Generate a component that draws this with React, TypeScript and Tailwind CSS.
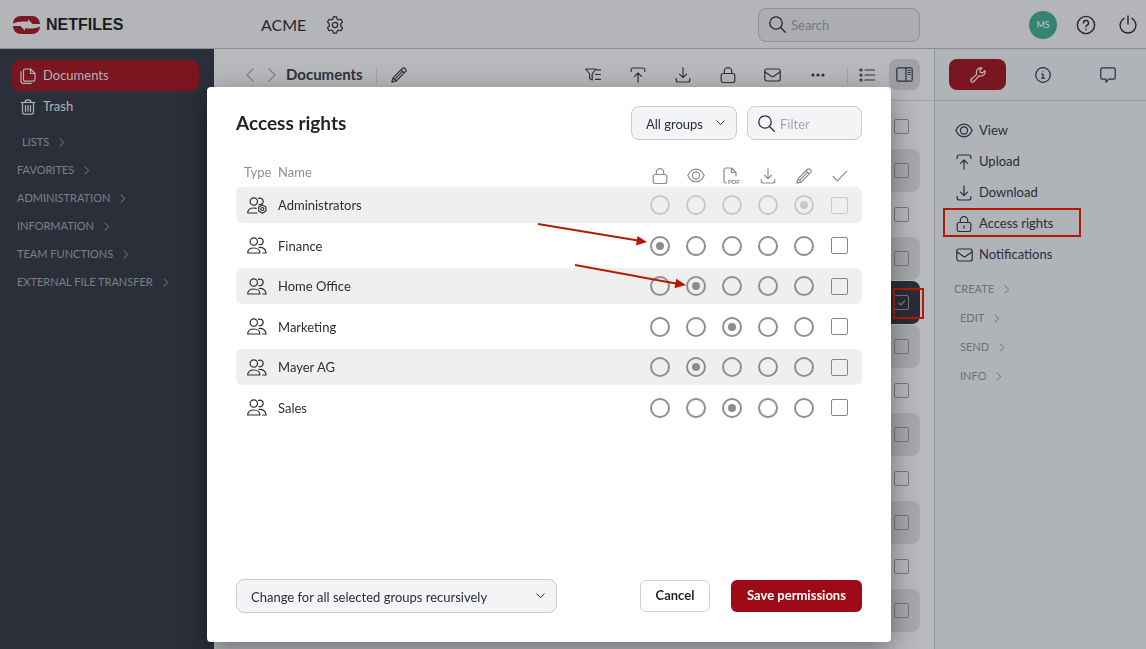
import { useState } from "react";
import type { ReactNode } from "react";

const MENU_SECTIONS = [
  { label: "LISTS", indent: true },
  { label: "FAVORITES" },
  { label: "ADMINISTRATION" },
  { label: "INFORMATION" },
  { label: "TEAM FUNCTIONS" },
  { label: "EXTERNAL FILE TRANSFER" },
];

const RIGHTS = ["none", "view", "pdf", "download", "edit"];

const GROUPS = [
  { name: "Administrators", right: "edit", locked: true },
  { name: "Finance", right: "none" },
  { name: "Home Office", right: "view" },
  { name: "Marketing", right: "pdf" },
  { name: "Mayer AG", right: "view" },
  { name: "Sales", right: "pdf" },
];

const FILE_ROWS = Array.from({ length: 12 }, (_, i) => i);
const SELECTED_ROW = 4;

type IconProps = { w?: number; h?: number; sw?: number; className?: string; children?: ReactNode };

function Icon({ w = 16, h = 16, sw = 1.2, className, children }: IconProps) {
  return (
    <svg
      width={w}
      height={h}
      viewBox={`0 0 ${w} ${h}`}
      fill="none"
      stroke="currentColor"
      strokeWidth={sw}
      strokeLinecap="round"
      strokeLinejoin="round"
      className={className ? `shrink-0 ${className}` : "shrink-0"}
      aria-hidden="true"
    >
      {children}
    </svg>
  );
}

const UploadIcon = () => (
  <Icon>
    <path d="M1.2 4.5V3c0-1.2.8-2 2-2h9.6c1.2 0 2 .8 2 2v1.5M8 15.200V6M4.5 9.300 8 5.800l3.5 3.500" />
  </Icon>
);

const DownloadIcon = () => (
  <Icon>
    <path d="M1.2 11.5V13c0 1.200.8 2 2 2h9.6c1.200 0 2-.8 2-2v-1.500M8 .8V10.500M4.500 7.200 8 10.700l3.500-3.500" />
  </Icon>
);

const LockIcon = ({ keyhole = false }: { keyhole?: boolean }) => (
  <Icon>
    <rect x="1.2" y="6.5" width="13.6" height="9" rx="2" />
    <path d="M4.300 6.500V4.300a3.700 3.700 0 0 1 7.400 0v2.200" />
    {keyhole && <path d="M8 9.800v2.400" />}
  </Icon>
);

const MailIcon = () => (
  <Icon w={17} h={14}>
    <rect x=".8" y="1" width="15.4" height="12" rx="2" />
    <path d="m1.200 4 6 4.200c.8.5 1.800.5 2.600 0l6-4.200" />
  </Icon>
);

const EyeIcon = () => (
  <Icon w={18} h={15}>
    <path d="M.8 7.500C2.600 3.800 5.600 1.200 9 1.200s6.400 2.600 8.200 6.300c-1.800 3.700-4.800 6.300-8.200 6.300S2.600 11.200.8 7.500Z" />
    <circle cx="9" cy="7.5" r="3.6" />
  </Icon>
);

const PencilIcon = () => (
  <Icon>
    <path d="M.8 15.200 2 10.800 11.300 1.500c.8-.8 1.900-.8 2.600 0l.6.6c.8.8.8 1.900 0 2.600L5.200 14l-4.400 1.200ZM10 2.800 13.200 6M2 10.800 5.200 14M3.800 12.200l8-8" />
  </Icon>
);

const SearchIcon = () => (
  <Icon w={17} h={17} sw={1.3}>
    <circle cx="7" cy="7" r="6.2" />
    <path d="m11.500 11.500 4.800 4.800" />
  </Icon>
);

const PdfIcon = () => (
  <Icon w={18} h={17}>
    <path d="M3.500 16H3c-1.200 0-2-.8-2-2V3c0-1.200.8-2 2-2h5.500L13 5.500V9M8.500 1v4.500H13" />
    <text x="5" y="16.500" fontSize="6" fontWeight="700" fill="currentColor" stroke="none" fontFamily="Liberation Sans, sans-serif">
      PDF
    </text>
  </Icon>
);

const CheckIcon = () => (
  <Icon>
    <path d="m1.200 8.500 4.200 4.300 9.400-9.600" />
  </Icon>
);

const ChevronIcon = () => (
  <Icon w={6} h={9} sw={1}>
    <path d="m1 .8 3.800 3.700L1 8.200" />
  </Icon>
);

function GroupIcon({ admin = false }: { admin?: boolean }) {
  return (
    <Icon w={20} h={17}>
      <circle cx="6.8" cy="4.5" r="3.7" />
      <path d="M11.600 1.400a3.300 3.300 0 1 1 .4 6.200" />
      {admin ? (
        <>
          <path d="M10 16H.7c0-3 2.400-5 6.100-5 .9 0 1.700.1 2.400.3" />
          <path d="m15.300 7.900 3.600 2.100v4.100l-3.600 2.100-3.600-2.100V10Z" />
          <circle cx="15.3" cy="12" r="1.5" />
        </>
      ) : (
        <>
          <path d="M.7 16c0-3 2.400-5 6.100-5s6.100 2 6.100 5Z" />
          <path d="M12 10.500c4-.4 7 1.900 7.200 5.500h-3.500" />
        </>
      )}
    </Icon>
  );
}

function Logo() {
  return (
    <a href="#" className="flex w-[236px] items-center gap-[6px] pl-[13px]">
      <svg width="27" height="18" viewBox="0 0 27 18" aria-hidden="true">
        <path
          fill="#7d1822"
          d="M0 7.500C.4 2.800 3.300 0 8 0h11c4.700 0 7.700 3 8 8H19.500L15 3.200v2.600C9 5 4 5.500 0 7.500ZM27 10.500c-.4 4.700-3.300 7.500-8 7.500H8c-4.700 0-7.700-3-8-8h7.500l4.500 4.800v-2.600c6 .8 11 .3 15-1.700Z"
        />
      </svg>
      <span className="font-['Liberation_Sans',sans-serif] text-[16px] font-bold text-[#191b20]">NETFILES</span>
    </a>
  );
}

function Header() {
  return (
    <header className="flex h-[49px] items-center border-b border-[#8c8d92] bg-[#b4b5b9] pt-px text-[#23262f] shadow-[0_1px_3px_rgba(0,0,0,0.2)]">
      <Logo />
      <div className="flex flex-1 items-center gap-5 pl-[25px]">
        <span className="text-[16px]">ACME</span>
        <button type="button" aria-label="Settings">
          <Icon w={18} h={18}>
            <path d="M7.400.8h3.200l.5 2.300 1.500.9 2.300-.8 1.600 2.800-1.700 1.700v2.600l1.700 1.700-1.600 2.800-2.300-.8-1.500.9-.5 2.300H7.400l-.5-2.300-1.500-.9-2.300.8L1.500 12l1.700-1.700V7.700L1.500 6l1.600-2.800 2.300.8 1.500-.9Z" />
            <circle cx="9" cy="9" r="2.700" />
          </Icon>
        </button>
      </div>
      <label className="flex h-[34px] w-[162px] items-center gap-[5px] rounded-lg border border-[#919297] bg-[#acadb1] px-[10px]">
        <SearchIcon />
        <input
          type="search"
          aria-label="Search"
          placeholder="Search"
          className="w-full min-w-0 bg-transparent pt-[3px] text-[13px] outline-none placeholder:text-[#77787d]"
        />
      </label>
      <div className="flex w-[226px] items-center justify-end gap-[19px] pr-[9px]">
        <span className="flex size-7 items-center justify-center rounded-full bg-[#358372] text-[9px] text-[#b9cfca]">MS</span>
        <button type="button" aria-label="Help">
          <Icon w={20} h={20} sw={1.4}>
            <circle cx="10" cy="10" r="8.600" />
            <path d="M7.500 8a2.500 2.500 0 1 1 3.600 2.200c-.8.4-1.100.8-1.100 1.600M10 14.300v.1" />
          </Icon>
        </button>
        <button type="button" aria-label="Log out" className="ml-1">
          <Icon w={18} h={19} sw={1.4}>
            <path d="M9 1v8M5 3.300a7.900 7.900 0 1 0 8 0" />
          </Icon>
        </button>
      </div>
    </header>
  );
}

function Sidebar() {
  return (
    <aside className="w-[214px] bg-[#2b2f3a] pt-[11px] pr-[15px] pl-3 text-[13px] text-[#b1b3b8]">
      <a href="#" className="flex h-[31px] items-center gap-[7px] rounded-lg bg-[#7a1620] px-2">
        <Icon>
          <path d="M5.200 1h5.300L15 5.500v6c0 1-.7 1.700-1.700 1.700H5.200c-1 0-1.700-.7-1.700-1.700V2.700C3.500 1.700 4.200 1 5.200 1ZM10.500 1v4.500H15M1 3.500v9.300c0 1.600 1 2.600 2.600 2.600h7.700" />
        </Icon>
        Documents
      </a>
      <a href="#" className="flex h-[31px] items-center gap-[7px] px-2">
        <Icon>
          <path d="M1 3.500h14M2.500 3.500V13c0 1.400.8 2.200 2.200 2.200h6.600c1.400 0 2.200-.8 2.200-2.200V3.500M5 3.500C5 1.800 6 .8 8 .8s3 1 3 2.700M5.500 6.500v5.800M8 6.500v5.800M10.500 6.500v5.800" />
        </Icon>
        Trash
      </a>
      <nav className="mt-[6px] pl-[5px] text-[11px] text-[#7c7f87]">
        {MENU_SECTIONS.map((s) => (
          <button
            key={s.label}
            type="button"
            className={`flex h-7 items-center gap-[10px] whitespace-nowrap ${s.indent ? "pl-[5px]" : ""}`}
          >
            {s.label}
            <ChevronIcon />
          </button>
        ))}
      </nav>
    </aside>
  );
}

function ToolButton({ label, children }: { label: string; children: ReactNode }) {
  return (
    <button type="button" aria-label={label} className="flex w-[45px] justify-center">
      {children}
    </button>
  );
}

function Toolbar() {
  return (
    <div className="flex h-[52px] items-center border-b border-[#a2a3a7] pl-8 text-[#30333d]">
      <button type="button" aria-label="Back" className="text-[#808186]">
        <Icon w={8} h={14}>
          <path d="M7 1 1 7l6 6" />
        </Icon>
      </button>
      <button type="button" aria-label="Forward" className="ml-[14px] text-[#808186]">
        <Icon w={8} h={14}>
          <path d="m1 1 6 6-6 6" />
        </Icon>
      </button>
      <h1 className="ml-[10px] text-[15px] font-bold">Documents</h1>
      <span className="ml-[13px] h-4 w-px bg-[#a2a3a7]" />
      <button type="button" aria-label="Rename" className="ml-[14px]">
        <PencilIcon />
      </button>
      <div className="ml-auto flex items-center">
        <ToolButton label="Filter list">
          <Icon>
            <path d="M.8 2h10L7.200 7v6l-2.600-1.500V7ZM11.500 2.800h4M10.500 7.500h5M10.500 12.300h5" />
          </Icon>
        </ToolButton>
        <ToolButton label="Upload"><UploadIcon /></ToolButton>
        <ToolButton label="Download"><DownloadIcon /></ToolButton>
        <ToolButton label="Access rights"><LockIcon /></ToolButton>
        <ToolButton label="Notifications"><MailIcon /></ToolButton>
        <ToolButton label="More">
          <Icon w={14} h={4}>
            <g fill="currentColor" stroke="none">
              <circle cx="2" cy="2" r="1.600" />
              <circle cx="7" cy="2" r="1.600" />
              <circle cx="12" cy="2" r="1.600" />
            </g>
          </Icon>
        </ToolButton>
        <span className="ml-[7px] h-4 w-px bg-[#a2a3a7]" />
        <button type="button" aria-label="List view" className="ml-[11px]">
          <Icon h={14}>
            <path d="M6 2h9.500M6 7h9.500M6 12h9.500" />
            <circle cx="2" cy="2" r="1" />
            <circle cx="2" cy="7" r="1" />
            <circle cx="2" cy="12" r="1" />
          </Icon>
        </button>
        <button type="button" aria-label="Details" className="mx-[14px] flex size-[31px] items-center justify-center rounded-lg bg-[#a0a1a6]">
          <Icon w={17} h={15}>
            <rect x=".8" y=".8" width="15.400" height="13.400" rx="1.500" />
            <path d="M10 1v13M12.200 3.500h2M12.200 5.500h2M12.200 7.500h2" />
          </Icon>
        </button>
      </div>
    </div>
  );
}

function FileList() {
  return (
    <ul className="flex flex-col gap-px px-[14px] pt-1">
      {FILE_ROWS.map((i) => (
        <li
          key={i}
          className={`flex h-[43px] shrink-0 items-center justify-end rounded-lg pr-[11px] ${
            i === SELECTED_ROW ? "bg-[#2a2d38]" : i % 2 ? "bg-[#a7a8ab]" : ""
          }`}
        >
          <span className="relative flex">
            <input
              type="checkbox"
              defaultChecked={i === SELECTED_ROW}
              aria-label={`Select entry ${i + 1}`}
              className="peer size-[15px] appearance-none rounded-[2px] border border-[#77787e]"
            />
            <Icon w={15} h={15} className="pointer-events-none absolute inset-0 hidden text-[#85878e] peer-checked:block">
              <path d="m4.500 7.600 2.200 2.200 4-4.200" />
            </Icon>
            {i === SELECTED_ROW && <span className="absolute -top-[7px] -left-px size-[31px] border-2 border-[#b41a00]" />}
          </span>
        </li>
      ))}
    </ul>
  );
}

function DetailsPanel() {
  const actions = [
    { label: "View", icon: <EyeIcon /> },
    { label: "Upload", icon: <UploadIcon /> },
    { label: "Download", icon: <DownloadIcon /> },
    { label: "Access rights", icon: <LockIcon keyhole />, marked: true },
    { label: "Notifications", icon: <MailIcon /> },
  ];
  return (
    <aside className="w-[212px] border-l border-[#939499] bg-[#b0b3b7] text-[13px] text-[#2b2e38]">
      <div className="flex h-[52px] items-center gap-2 border-b border-[#9b9da1] pl-[14px]">
        <button type="button" aria-label="Tools" className="flex h-[31px] w-[57px] items-center justify-center rounded-lg bg-[#7a1620] text-[#c6b5b9]">
          <Icon>
            <path d="M1.300 14.700c-.8-.8-.7-2 0-2.700l5.400-4.600C6 4.700 6.500 3 7.800 1.900 9 .9 10.600.6 12 1L9.800 3.200l.4 2.200 2.400.4L14.900 3.600c.5 1.500.1 3.200-1 4.300-1.200 1.200-2.900 1.600-5.100 1L4 14.700c-.7.8-1.900.8-2.700 0ZM3 13v.1" />
          </Icon>
        </button>
        <button type="button" aria-label="Info" className="flex w-[57px] justify-center">
          <Icon>
            <circle cx="8" cy="8" r="7.300" />
            <path d="M6.700 7H8v4M6.500 11.200h3M8 4.500v.2" />
          </Icon>
        </button>
        <button type="button" aria-label="Comments" className="flex w-[57px] justify-center">
          <Icon>
            <path d="M2.200.8h11.600c1 0 1.400.6 1.400 1.400v8.600c0 .9-.5 1.400-1.400 1.400H9l-3 3v-3H2.200c-.9 0-1.400-.5-1.400-1.400V2.200c0-.9.5-1.400 1.400-1.400Z" />
          </Icon>
        </button>
      </div>
      <ul className="pt-[14px]">
        {actions.map((a) => (
          <li key={a.label} className="relative">
            <a href="#" className="flex h-[31px] items-center gap-[6px] pl-5">
              <span className="flex w-[18px] justify-center">{a.icon}</span>
              {a.label}
            </a>
            {a.marked && <span className="pointer-events-none absolute top-0 left-2 h-[29px] w-[138px] border-2 border-[#b41a00]" />}
          </li>
        ))}
      </ul>
      <nav className="mt-[5px] pl-[19px] text-[11px] text-[#6d7077]">
        {["CREATE", "EDIT", "SEND", "INFO"].map((label) => (
          <button
            key={label}
            type="button"
            className={`flex h-[29px] items-center gap-[10px] ${label === "CREATE" ? "" : "pl-[6px]"}`}
          >
            {label}
            <ChevronIcon />
          </button>
        ))}
      </nav>
    </aside>
  );
}

function Select({ label, option, className }: { label: string; option: string; className: string }) {
  return (
    <div className={`relative ${className}`}>
      <select
        aria-label={label}
        className="h-[34px] w-full appearance-none rounded-lg border border-[#c9ccd0] bg-[#f3f4f6] px-[14px] pt-[3px] text-[13px] text-[#2b2e38]"
      >
        <option>{option}</option>
      </select>
      <Icon w={9} h={6} sw={1} className="pointer-events-none absolute top-[14px] right-3">
        <path d="m.8.8 3.700 3.900L8.200.8" />
      </Icon>
    </div>
  );
}

function AccessDialog() {
  const [rights, setRights] = useState<Record<string, string>>(
    Object.fromEntries(GROUPS.map((g) => [g.name, g.right])),
  );

  const columns = [
    { label: "No access", icon: <LockIcon /> },
    { label: "View", icon: <EyeIcon /> },
    { label: "PDF", icon: <PdfIcon /> },
    { label: "Download", icon: <DownloadIcon /> },
    { label: "Edit", icon: <PencilIcon /> },
  ];

  return (
    <div className="fixed inset-0 flex justify-center pt-[87px] pr-12 pb-[7px]">
      <div
        role="dialog"
        aria-label="Access rights"
        className="relative flex w-full max-w-[684px] flex-col rounded-[4px] bg-white px-[29px] pt-[19px] pb-[29px] text-[#2b2e38] shadow-[0_8px_28px_rgba(0,0,0,0.4)]"
      >
        <div className="flex items-center gap-[10px]">
          <h2 className="mr-auto text-[19px] font-bold text-[#1f2229]">Access rights</h2>
          <Select label="Groups" option="All groups" className="w-[106px]" />
          <label className="flex h-[34px] w-[115px] items-center gap-[5px] rounded-lg border border-[#c9ccd0] bg-[#f3f4f6] px-[10px]">
            <SearchIcon />
            <input
              type="text"
              aria-label="Filter"
              placeholder="Filter"
              className="w-full min-w-0 bg-transparent pt-[3px] text-[13px] outline-none placeholder:text-[#a4a6ab]"
            />
          </label>
        </div>

        <table className="mt-5 w-full table-fixed text-left text-[13px]">
          <thead className="text-[#8b8d93]">
            <tr className="h-[27px]">
              <th className="w-[42px] pt-[3px] pl-2 align-top font-normal">Type</th>
              <th className="pt-[3px] align-top font-normal">Name</th>
              {columns.map((c) => (
                <th key={c.label} aria-label={c.label} className="w-9 pt-1">
                  <span className="flex justify-center">{c.icon}</span>
                </th>
              ))}
              <th aria-label="Apply" className="w-10 pt-1 pr-[5px]">
                <span className="flex justify-center"><CheckIcon /></span>
              </th>
            </tr>
          </thead>
          <tbody>
            {GROUPS.map((g, i) => (
              <tr key={g.name} className={i % 2 ? "h-[45px]" : "h-9 bg-[#efefef]"}>
                <td className="rounded-l-md pl-[11px]">
                  <GroupIcon admin={g.locked} />
                </td>
                <td className="pt-[2px]">{g.name}</td>
                {RIGHTS.map((r) => (
                  <td key={r}>
                    <input
                      type="radio"
                      name={g.name}
                      aria-label={`${g.name}: ${r}`}
                      checked={rights[g.name] === r}
                      disabled={g.locked}
                      onChange={() => setRights({ ...rights, [g.name]: r })}
                      className="mx-auto flex size-5 appearance-none items-center justify-center rounded-full border-2 border-[#8e8f94] before:size-2 before:rounded-full checked:before:bg-[#8b8c91] disabled:border-[#c8c9cb] disabled:checked:before:bg-[#c8c9cb]"
                    />
                  </td>
                ))}
                <td className="rounded-r-md pr-[5px]">
                  <input
                    type="checkbox"
                    aria-label={`Select ${g.name}`}
                    disabled={g.locked}
                    className="mx-auto block size-[17px] appearance-none rounded-[2px] border border-[#85868c] disabled:border-[#c8c9cb]"
                  />
                </td>
              </tr>
            ))}
          </tbody>
        </table>

        <div className="mt-auto flex items-center">
          <Select label="Scope" option="Change for all selected groups recursively" className="w-[321px]" />
          <button type="button" className="ml-auto h-8 w-[70px] rounded-md border border-[#cfd1d4] text-[13px] font-bold text-[#1f2229]">
            Cancel
          </button>
          <button type="button" className="ml-[21px] h-8 w-[131px] rounded-md bg-[#9e0b17] text-[13px] font-bold text-white">
            Save permissions
          </button>
        </div>

        {/* pointers to the two changed groups */}
        <svg className="pointer-events-none absolute top-0 left-0" width="684" height="300" aria-hidden="true">
          <g stroke="#b41a00" strokeWidth="2">
            <path d="M331 137 431 153.500" />
            <path d="M368 178 469 196.500" />
          </g>
          <g fill="#b41a00">
            <path d="m440 155-11 3.500 1.500-9.500Z" />
            <path d="m479 198-11.500 3.300 1.700-9.500Z" />
          </g>
        </svg>
      </div>
    </div>
  );
}

export default function App() {
  return (
    <div className="flex h-screen flex-col overflow-hidden font-[Lato,sans-serif]">
      <Header />
      <div className="flex min-h-0 flex-1">
        <Sidebar />
        <main className="min-w-0 flex-1 bg-[#b8b9bd]">
          <Toolbar />
          <FileList />
        </main>
        <DetailsPanel />
      </div>
      <AccessDialog />
    </div>
  );
}
